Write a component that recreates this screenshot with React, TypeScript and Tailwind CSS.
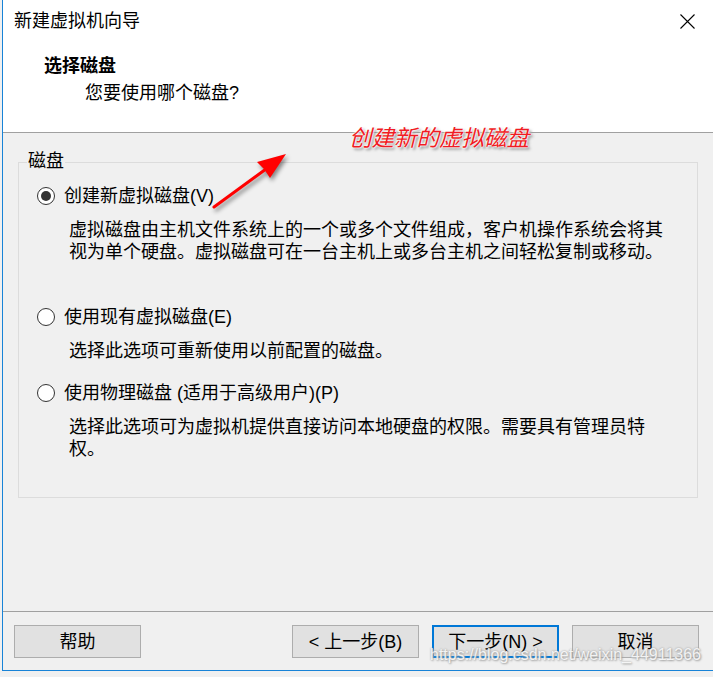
import React from "react";

const FONT = { fontFamily: '"Liberation Sans", "Noto Sans CJK SC", sans-serif' };

function Radio({ checked }: { checked?: boolean }) {
  return (
    <span className="flex h-[18px] w-[18px] shrink-0 items-center justify-center rounded-full border border-[#333333] bg-white">
      {checked && <span className="h-[10px] w-[10px] rounded-full bg-[#333333]" />}
    </span>
  );
}

function Btn({ children, primary }: { children: React.ReactNode; primary?: boolean }) {
  return (
    <div
      className={
        "flex h-[33px] w-[127px] items-center justify-center bg-[#e1e1e1] text-[18px] leading-none text-black " +
        (primary ? "border-2 border-[#0078d7]" : "border border-[#adadad]")
      }
    >
      {children}
    </div>
  );
}

export default function App() {
  return (
    <div className="relative h-[677px] w-[713px] overflow-hidden bg-[#f0f0f0]" style={FONT}>
      <div className="ml-[2px] flex h-[671px] flex-col border-b border-l border-[#1883d7] bg-[#f0f0f0]">
        {/* header */}
        <div className="h-[133px] shrink-0 border-b border-[#a0a0a0] bg-white">
          <div className="flex h-[42px] items-center justify-between pl-[11px] pr-[18px]">
            <span className="text-[18px] leading-[22px] text-black">新建虚拟机向导</span>
            <svg width="15" height="15" viewBox="0 0 15 15">
              <path d="M0.5 0.5 L14.5 14.5 M14.5 0.5 L0.5 14.5" stroke="#000" strokeWidth="1.1" fill="none" />
            </svg>
          </div>
          <div className="mt-[13px] pl-[41px] text-[18px] font-bold leading-[22px] text-black">选择磁盘</div>
          <div className="mt-[5px] pl-[82px] text-[18px] leading-[22px] text-black">您要使用哪个磁盘?</div>
        </div>

        {/* body */}
        <div className="flex-1">
          <div className="ml-[15px] mt-[29px] h-[336px] w-[680px] border border-[#dcdcdc]">
            <div className="-mt-[13px] ml-[8px] w-fit bg-[#f0f0f0] px-[1px] text-[18px] leading-[22px] text-black">磁盘</div>

            <div className="mt-[13px] flex h-[22px] items-center pl-[18px]">
              <Radio checked />
              <span className="ml-[9px] text-[18px] leading-[22px] text-black">创建新虚拟磁盘(V)</span>
            </div>
            <div className="ml-[50px] mt-[12px] w-[600px] text-[18px] leading-[22px] text-black">
              虚拟磁盘由主机文件系统上的一个或多个文件组成，客户机操作系统会将其视为单个硬盘。虚拟磁盘可在一台主机上或多台主机之间轻松复制或移动。
            </div>

            <div className="mt-[43px] flex h-[22px] items-center pl-[18px]">
              <Radio />
              <span className="ml-[9px] text-[18px] leading-[22px] text-black">使用现有虚拟磁盘(E)</span>
            </div>
            <div className="ml-[50px] mt-[12px] w-[600px] text-[18px] leading-[22px] text-black">
              选择此选项可重新使用以前配置的磁盘。
            </div>

            <div className="mt-[20px] flex h-[22px] items-center pl-[18px]">
              <Radio />
              <span className="ml-[9px] text-[18px] leading-[22px] text-black">使用物理磁盘 (适用于高级用户)(P)</span>
            </div>
            <div className="ml-[50px] mt-[12px] w-[600px] text-[18px] leading-[22px] text-black">
              选择此选项可为虚拟机提供直接访问本地硬盘的权限。需要具有管理员特权。
            </div>
          </div>
        </div>

        {/* footer */}
        <div className="flex h-[59px] shrink-0 items-start justify-between border-t border-[#a0a0a0] pl-[11px] pr-[14px] pt-[13px]">
          <Btn>帮助</Btn>
          <div className="flex gap-[13px]">
            <Btn>&lt; 上一步(B)</Btn>
            <Btn primary>下一步(N) &gt;</Btn>
            <Btn>取消</Btn>
          </div>
        </div>
      </div>

      {/* annotation overlay */}
      <div className="absolute left-[349px] top-[126px] text-[22.5px] italic leading-[26px] text-[#f01c24] [text-shadow:0_0_1px_#fff,0_0_2px_#fff,0_0_3px_#fff,2px_2px_3px_#777]">
        创建新的虚拟磁盘
      </div>
      <svg
        className="absolute left-0 top-0 drop-shadow-[2px_3px_2px_rgba(0,0,0,0.45)]"
        width="713"
        height="677"
        viewBox="0 0 713 677"
        fill="none"
      >
        <line x1="214" y1="207" x2="266" y2="169" stroke="#ff0000" strokeWidth="3" strokeLinecap="round" />
        <polygon points="286,154 270,178 264,169 257,162" fill="#ff0000" />
      </svg>

      {/* watermark */}
      <div className="absolute left-[430px] top-[645px] text-[16px] leading-[20px] text-white/85 [text-shadow:0_0_2px_#999,1px_1px_2px_#aaa]">
        https://blog.csdn.net/weixin_44911366
      </div>
    </div>
  );
}
